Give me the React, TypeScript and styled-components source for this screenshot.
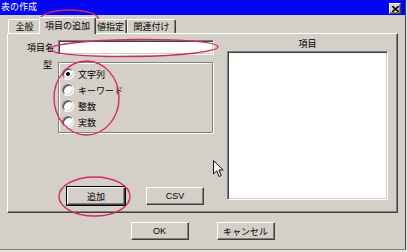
import React from 'react';
import styled, { createGlobalStyle } from "styled-components";

const GlobalStyle = createGlobalStyle`
    html, body {
        margin: 0;
        padding: 0;
        background: #e4e2dc;
    }
    body {
        font-family: "Liberation Sans", "Noto Sans CJK JP", sans-serif;
        font-size: 9px;
    }
`

type TabProps = {
    w: number
    active?: boolean
}

type ButtonProps = {
    isDefault?: boolean
}

type RadioProps = {
    checked?: boolean
}

const tabs = [
    {name: "全般", w: 33},
    {name: "項目の追加", w: 53, active: true},
    {name: "値指定", w: 33},
    {name: "関連付け", w: 49},
]

const types = ["文字列", "キーワード", "整数", "実数"]

export default function App() {
    return (
        <>
            <GlobalStyle/>
            <Window>
                <TitleBar>
                    <Title>表の作成</Title>
                    <CloseButton>
                        <svg width="7" height="6" viewBox="0 0 7 6">
                            <path d="M0 0 L7 6 M7 0 L0 6" stroke="#000" strokeWidth="1.6"/>
                        </svg>
                    </CloseButton>
                </TitleBar>

                <TabStrip>
                    {tabs.map(t => (
                        <Tab key={t.name} w={t.w} active={t.active}>{t.name}</Tab>
                    ))}
                </TabStrip>

                <TabPanel>
                    <LeftColumn>
                        <FieldRow>
                            <FieldLabel>項目名</FieldLabel>
                            <TextInput/>
                        </FieldRow>
                        <TypeRow>
                            <TypeLabel>型</TypeLabel>
                            <GroupBox>
                                {types.map((t, i) => (
                                    <RadioRow key={t}>
                                        <Radio checked={i === 0}/>
                                        <span>{t}</span>
                                    </RadioRow>
                                ))}
                            </GroupBox>
                        </TypeRow>
                        <ActionRow>
                            <Button isDefault>追加</Button>
                            <Button>CSV</Button>
                        </ActionRow>
                    </LeftColumn>
                    <RightColumn>
                        <ListTitle>項目</ListTitle>
                        <ListBox/>
                    </RightColumn>
                </TabPanel>

                <Footer>
                    <Button>OK</Button>
                    <Button>キャンセル</Button>
                </Footer>

                <Marks width="407" height="252" viewBox="0 0 407 252">
                    <g fill="none" stroke="#d42a63" strokeWidth="1.4">
                        <ellipse cx="69.5" cy="19" rx="29" ry="9"/>
                        <ellipse cx="134" cy="48" rx="84" ry="8.5" transform="rotate(-0.8 134 48)"/>
                        <ellipse cx="86.5" cy="98" rx="32.5" ry="37"/>
                        <ellipse cx="94.5" cy="196.5" rx="35.5" ry="19.5"/>
                    </g>
                </Marks>

                <Pointer width="11" height="18" viewBox="0 0 11 18">
                    <path d="M0.5 0.5 L0.5 14 L3.8 10.8 L6 16.5 L8.2 15.6 L6 10 L10.2 10 Z"
                          fill="#f4f4f4" stroke="#111" strokeWidth="1"/>
                </Pointer>
            </Window>
        </>
    );
}

const Window = styled.div`
    position: relative;
    box-sizing: border-box;
    width: 406px;
    height: 250px;
    background: #d4d0c8;
    border-right: 1px solid #404040;
    border-bottom: 1px solid #808080;
    overflow: hidden;
`

const TitleBar = styled.div`
    height: 15px;
    background: #0404f4;
    display: flex;
    align-items: center;
    justify-content: space-between;
    padding: 0 4px 0 1px;
`

const Title = styled.span`
    color: #fff;
    font-size: 9px;
    line-height: 15px;
`

const CloseButton = styled.div`
    box-sizing: border-box;
    width: 12px;
    height: 11px;
    margin-top: 2px;
    background: #d4d0c8;
    border: 1px solid;
    border-color: #fff #404040 #404040 #fff;
    box-shadow: inset -1px -1px 0 #808080;
    display: flex;
    align-items: center;
    justify-content: center;
`

const TabStrip = styled.div`
    display: flex;
    align-items: flex-end;
    height: 17px;
    margin-top: 2px;
    padding-left: 8px;
    position: relative;
    z-index: 1;
    margin-bottom: -1px;
`

const Tab = styled.div<TabProps>`
    box-sizing: border-box;
    width: ${props => props.w + (props.active ? 4 : 0)}px;
    height: ${props => props.active ? 17 : 14}px;
    margin: 0 ${props => props.active ? -2 : 0}px ${props => props.active ? 0 : 1}px;
    background: #d4d0c8;
    border-top: 1px solid #fff;
    border-left: 1px solid #fff;
    border-right: 1px solid #404040;
    border-radius: 2px 2px 0 0;
    box-shadow: inset -1px 0 0 #808080;
    display: flex;
    align-items: center;
    justify-content: center;
    padding-bottom: ${props => props.active ? 2 : 0}px;
    color: #000;
    white-space: nowrap;
    z-index: ${props => props.active ? 2 : 1};
`

const TabPanel = styled.div`
    box-sizing: border-box;
    margin-left: 7px;
    width: 391px;
    height: 180px;
    border-top: 1px solid #fff;
    border-left: 1px solid #fff;
    border-right: 1px solid #404040;
    border-bottom: 1px solid #404040;
    box-shadow: inset -1px -1px 0 #808080;
    display: grid;
    grid-template-columns: 219px 161px;
`

const LeftColumn = styled.div`
    display: flex;
    flex-direction: column;
    padding-top: 6px;
`

const FieldRow = styled.div`
    display: grid;
    grid-template-columns: 50px 156px;
    align-items: center;
`

const FieldLabel = styled.span`
    text-align: right;
    padding-right: 4px;
`

const TextInput = styled.div`
    box-sizing: border-box;
    height: 15px;
    background: #fff;
    border: 1px solid;
    border-color: #808080 #fff #fff #808080;
    box-shadow: inset 1px 1px 0 #404040, inset -1px -1px 0 #d4d0c8;
`

const TypeRow = styled.div`
    display: grid;
    grid-template-columns: 50px 155px;
    margin-top: 7px;
`

const TypeLabel = styled.span`
    text-align: right;
    padding-right: 6px;
    margin-top: -3px;
    line-height: 13px;
`

const GroupBox = styled.div`
    box-sizing: border-box;
    height: 71px;
    border: 1px solid #808080;
    box-shadow: 1px 1px 0 #fff, inset 1px 1px 0 #fff;
    padding: 3px 0 0 3px;
`

const RadioRow = styled.div`
    display: flex;
    align-items: center;
    gap: 4px;
    height: 16px;
`

const Radio = styled.span<RadioProps>`
    position: relative;
    box-sizing: border-box;
    width: 12px;
    height: 12px;
    border-radius: 50%;
    background: #fff;
    border: 1px solid;
    border-color: #808080 #fff #fff #808080;
    box-shadow: inset 1px 1px 0 #404040, inset -1px -1px 0 #d4d0c8;

    &::after {
        content: "";
        display: ${props => props.checked ? "block" : "none"};
        position: absolute;
        left: 3px;
        top: 3px;
        width: 4px;
        height: 4px;
        border-radius: 50%;
        background: #000;
    }
`

const ActionRow = styled.div`
    display: flex;
    gap: 21px;
    margin-top: auto;
    padding: 0 0 7px 59px;
`

const Button = styled.div<ButtonProps>`
    box-sizing: border-box;
    width: 58px;
    height: 18px;
    background: #d4d0c8;
    border: 1px solid;
    border-color: #fff #404040 #404040 #fff;
    box-shadow: inset -1px -1px 0 #808080${props => props.isDefault ? ", 0 0 0 1px #000" : ""};
    display: flex;
    align-items: center;
    justify-content: center;
    color: #000;
    font-size: 9px;
`

const RightColumn = styled.div`
    display: flex;
    flex-direction: column;
    padding-top: 4px;
`

const ListTitle = styled.div`
    text-align: center;
    line-height: 13px;
`

const ListBox = styled.div`
    box-sizing: border-box;
    height: 149px;
    background: #fff;
    border: 1px solid;
    border-color: #808080 #fff #fff #808080;
    box-shadow: inset 1px 1px 0 #404040, inset -1px -1px 0 #d4d0c8;
`

const Footer = styled.div`
    display: flex;
    justify-content: center;
    gap: 28px;
    margin-top: 9px;
`

const Marks = styled.svg`
    position: absolute;
    left: 0;
    top: 0;
    pointer-events: none;
`

const Pointer = styled.svg`
    position: absolute;
    left: 213px;
    top: 160px;
    pointer-events: none;
`
